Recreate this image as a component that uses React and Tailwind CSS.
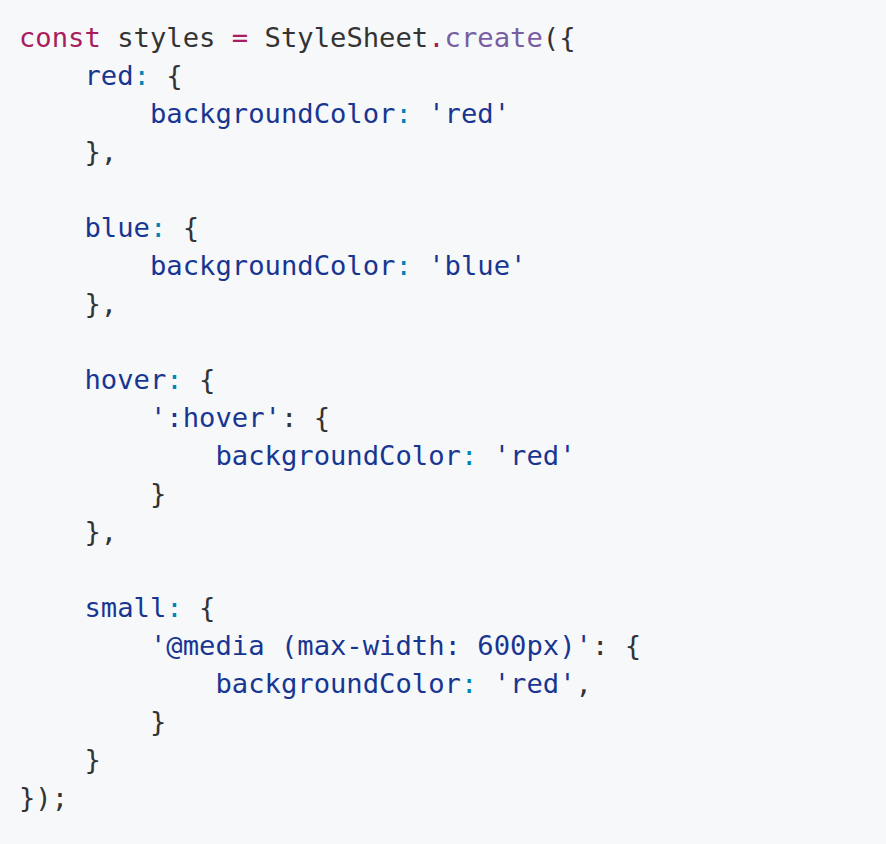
import React from "react";

const K = ({ children }) => <span className="text-[#a71d5d]">{children}</span>;
const F = ({ children }) => <span className="text-[#795da3]">{children}</span>;
const B = ({ children }) => <span className="text-[#183691]">{children}</span>;
const C = ({ children }) => <span className="text-[#0086b3]">{children}</span>;

export default function App() {
  const lines = [
    <><K>const</K> styles <K>=</K> StyleSheet<K>.</K><F>create</F>({"{"}</>,
    <>{"    "}<B>red</B><C>:</C> {"{"}</>,
    <>{"        "}<B>backgroundColor</B><C>:</C> <B>'red'</B></>,
    <>{"    "}{"},"}</>,
    <>{" "}</>,
    <>{"    "}<B>blue</B><C>:</C> {"{"}</>,
    <>{"        "}<B>backgroundColor</B><C>:</C> <B>'blue'</B></>,
    <>{"    "}{"},"}</>,
    <>{" "}</>,
    <>{"    "}<B>hover</B><C>:</C> {"{"}</>,
    <>{"        "}<B>':hover'</B>: {"{"}</>,
    <>{"            "}<B>backgroundColor</B><C>:</C> <B>'red'</B></>,
    <>{"        "}{"}"}</>,
    <>{"    "}{"},"}</>,
    <>{" "}</>,
    <>{"    "}<B>small</B><C>:</C> {"{"}</>,
    <>{"        "}<B>'@media (max-width: 600px)'</B>: {"{"}</>,
    <>{"            "}<B>backgroundColor</B><C>:</C> <B>'red'</B>,</>,
    <>{"        "}{"}"}</>,
    <>{"    "}{"}"}</>,
    <>{"});"}</>,
  ];
  return (
    <div className="w-[886px] h-[844px] bg-[#f6f8fa] overflow-hidden">
      <pre
        className="pt-[19px] pl-[19px] text-[27.2px] leading-[38px] text-[#333333] m-0"
        style={{ fontFamily: '"DejaVu Sans Mono", monospace' }}
      >
        {lines.map((l, i) => (
          <div key={i} className="h-[38px]">{l}</div>
        ))}
      </pre>
    </div>
  );
}
